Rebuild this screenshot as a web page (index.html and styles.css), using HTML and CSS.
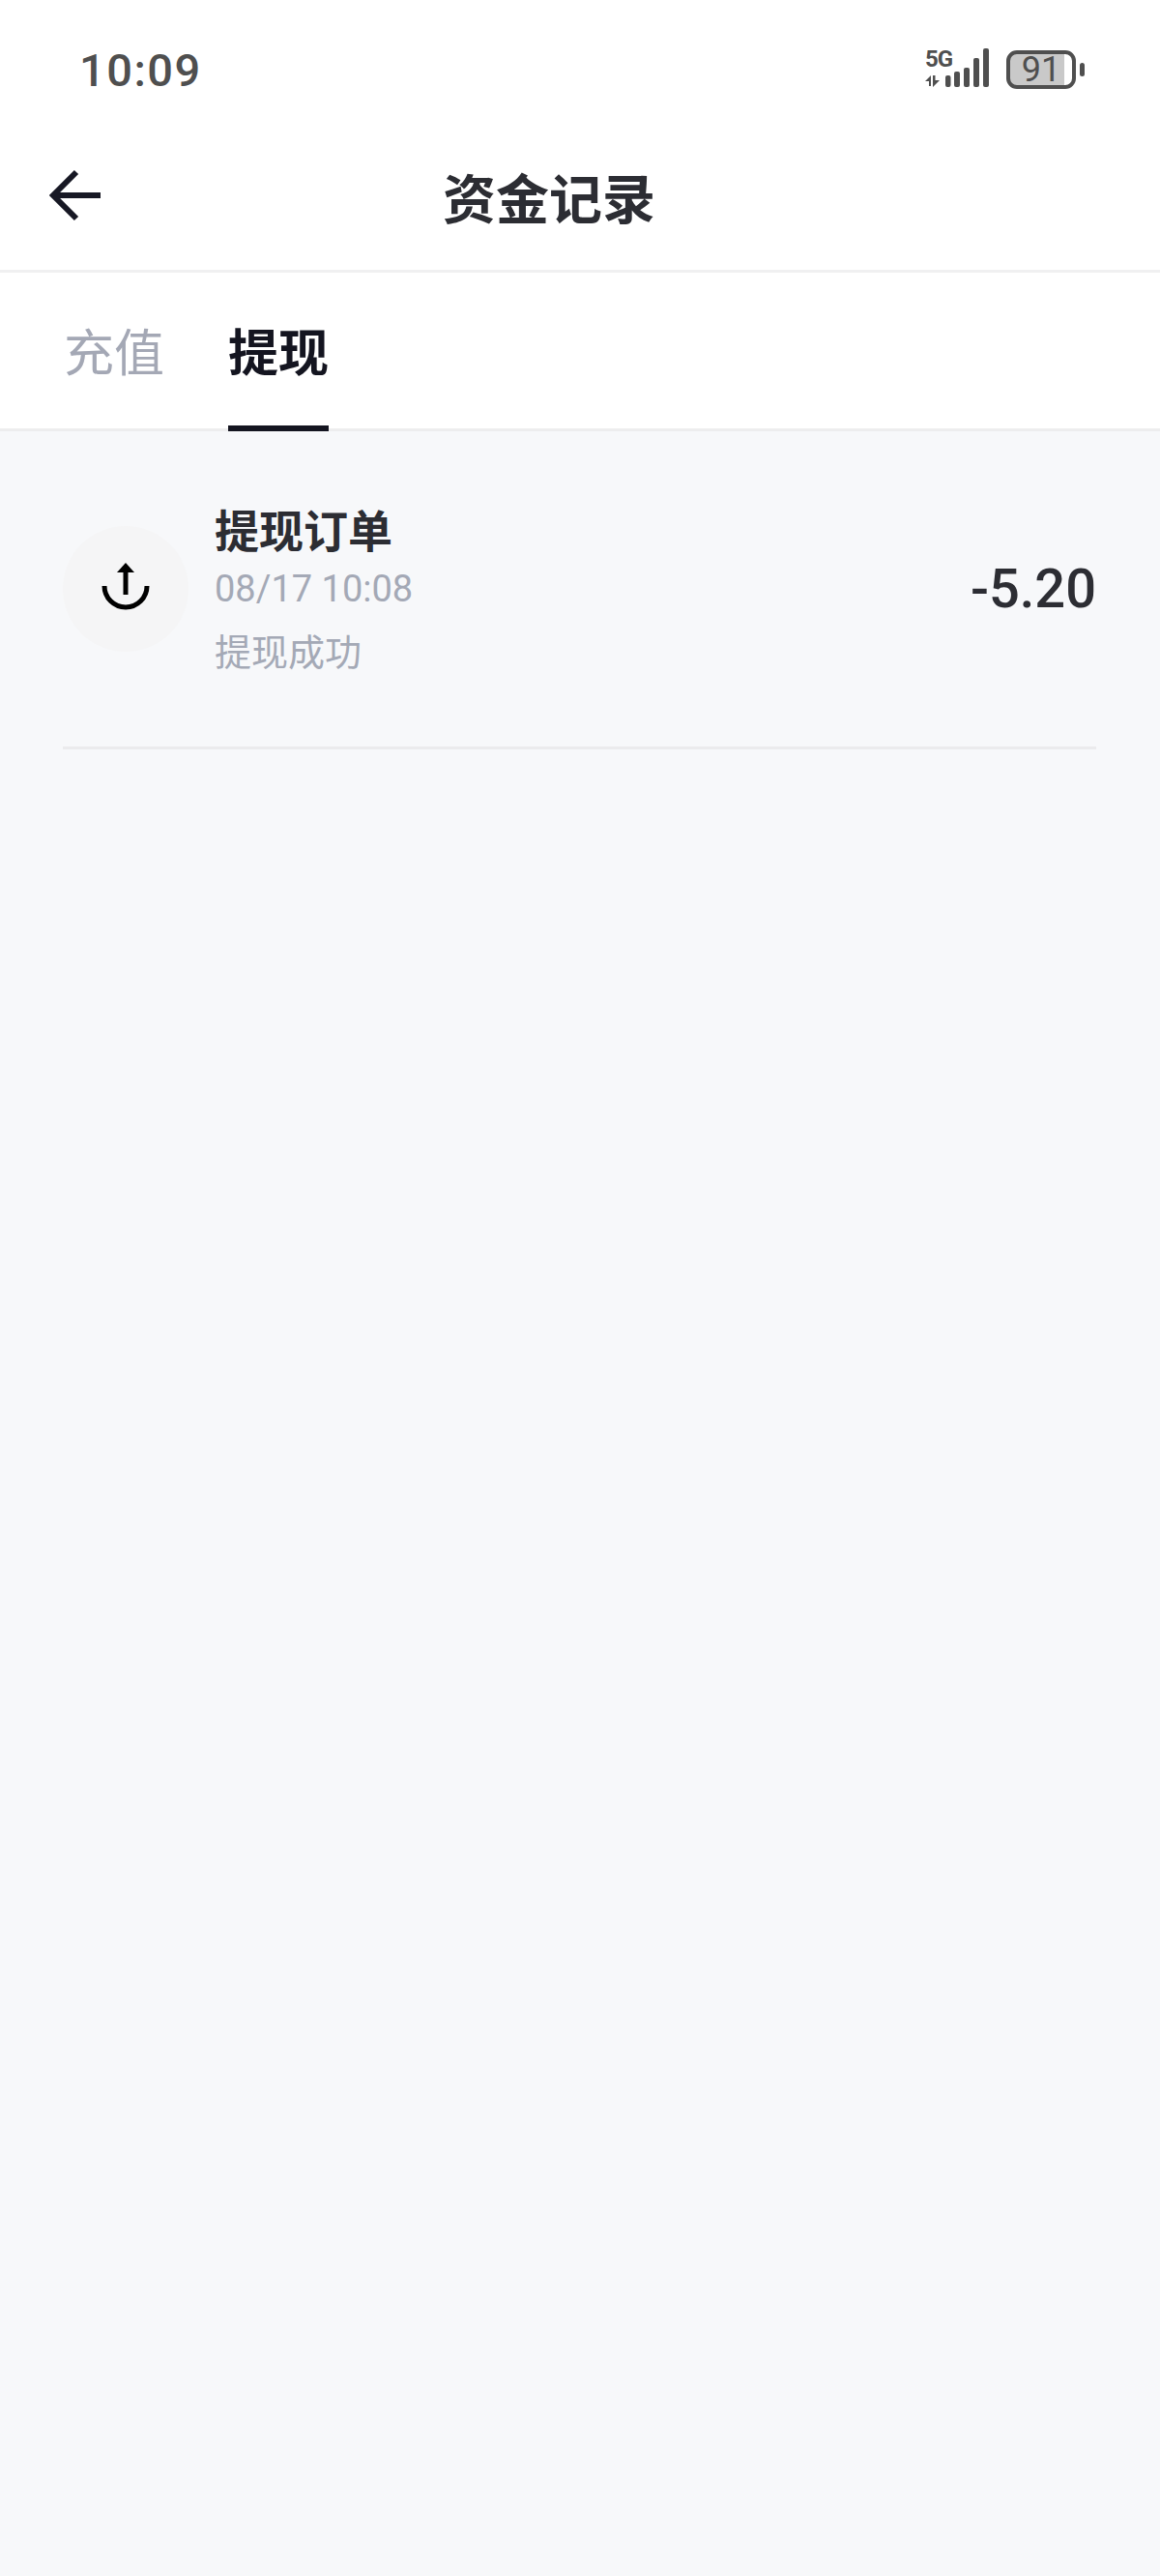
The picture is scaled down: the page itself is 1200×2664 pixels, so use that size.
FILE: index.html
```html
<!DOCTYPE html>
<html lang="zh-CN">
<head>
<meta charset="utf-8">
<title>资金记录</title>
<link rel="stylesheet" href="styles.css">
</head>
<body>
<div class="page">
  <header class="status">
    <span class="time">10:09</span>
    <div class="status-icons">
      <svg class="signal" width="70" height="46" viewBox="0 0 70 46">
        <text class="net" x="0" y="21">5G</text>
        <g fill="#4f4f4f">
          <rect x="21" y="30" width="5.5" height="12" rx="2"/>
          <rect x="30" y="26" width="6" height="16" rx="2"/>
          <rect x="40" y="22" width="6" height="20" rx="2"/>
          <rect x="50" y="12" width="6" height="30" rx="2"/>
          <rect x="60" y="2" width="6" height="40" rx="2"/>
          <path d="M6 30v11H4v-5H0zM8 30h2.500v5h4.500l-7 7z"/>
        </g>
      </svg>
      <div class="battery"><span class="battery-num">91</span></div>
      <span class="battery-nub"></span>
    </div>
  </header>
  <nav class="nav">
    <svg class="back" width="56" height="56" viewBox="0 0 56 56">
      <path d="M54 28H6M29 4 5 28l24 24" fill="none" stroke="#171824" stroke-width="6"/>
    </svg>
    <h1 class="title">资金记录</h1>
  </nav>
  <div class="tabs">
    <span class="tab">充值</span>
    <span class="tab tab-active">提现</span>
  </div>
  <main class="list">
    <div class="row">
      <div class="avatar">
        <svg width="60" height="60" viewBox="0 0 60 60">
          <path d="M30 36V10" fill="none" stroke="#000" stroke-width="5"/>
          <path d="M30 3l9 10H21z" fill="#000"/>
          <path d="M8 27a22 22 0 0 0 44 0" fill="none" stroke="#000" stroke-width="5"/>
        </svg>
      </div>
      <div class="info">
        <div class="info-title">提现订单</div>
        <div class="info-date">08/17 10:08</div>
        <div class="info-state">提现成功</div>
      </div>
      <div class="amount">-5.20</div>
    </div>
  </main>
</div>
</body>
</html>
```

FILE: styles.css
```css
* { box-sizing: border-box; }
html, body { margin: 0; padding: 0; }
body { font-family: "Noto Sans CJK SC", "Noto Sans", sans-serif; background: #f7f8fa; }
.page { width: 1200px; height: 2664px; display: flex; flex-direction: column; background: #f7f8fa; overflow: hidden; }

.status { height: 144px; background: #fff; display: flex; align-items: center; justify-content: space-between; padding: 0 78px 0 82px; }
.time { font-family: "Roboto", sans-serif; font-size: 47px; font-weight: 500; color: #4f4f4f; letter-spacing: 1.5px; }
.status-icons { display: flex; align-items: center; }
.signal { display: block; margin-right: 14px; margin-top: -3px; }
.net { font-family: "Roboto", sans-serif; font-size: 24px; font-weight: 700; fill: #4f4f4f; letter-spacing: -1px; }
.battery { width: 72px; height: 40px; border: 4px solid #4f4f4f; border-radius: 11px; display: flex; align-items: center; justify-content: center; background: linear-gradient(to right, #c9c9c9 88%, #fff 88%); }
.battery-num { font-family: "Roboto", sans-serif; font-size: 36px; line-height: 32px; color: #4f4f4f; }
.battery-nub { width: 5px; height: 14px; margin-left: 4px; border-radius: 3px; background: #4f4f4f; }

.nav { height: 138px; background: #fff; display: flex; align-items: center; padding: 0 0 20px 50px; border-bottom: 3px solid #f0f0f1; }
.back { display: block; flex: none; }
.title { margin: 0 0 0 352px; font-size: 55px; line-height: 78px; font-weight: 700; color: #2c2d33; }

.tabs { height: 164px; background: #fff; display: flex; gap: 66px; padding: 0 0 0 66px; border-bottom: 3px solid #ededee; }
.tab { height: 164px; padding-top: 42px; width: 104px; font-size: 52px; line-height: 76px; color: #a4a8b5; text-align: center; }
.tab-active { color: #141520; font-weight: 700; border-bottom: 6px solid #141520; }

.list { padding: 0 66px 0 65px; }
.row { height: 329px; padding-top: 0; display: flex; align-items: center; border-bottom: 3px solid #ebebed; }
.avatar { width: 130px; height: 130px; flex: none; border-radius: 50%; background: #f5f5f6; display: flex; align-items: center; justify-content: center; }
.info { flex: 1; margin-left: 27px; display: flex; flex-direction: column; }
.info-title { font-size: 46px; line-height: 64px; font-weight: 700; color: #2c2d33; }
.info-date { font-family: "Roboto", sans-serif; font-size: 38px; line-height: 62px; color: #a4a9b6; }
.info-state { font-size: 38px; line-height: 64px; color: #a4a9b6; }
.amount { font-family: "Roboto", sans-serif; font-size: 56px; font-weight: 500; color: #2c2d33; }
```
